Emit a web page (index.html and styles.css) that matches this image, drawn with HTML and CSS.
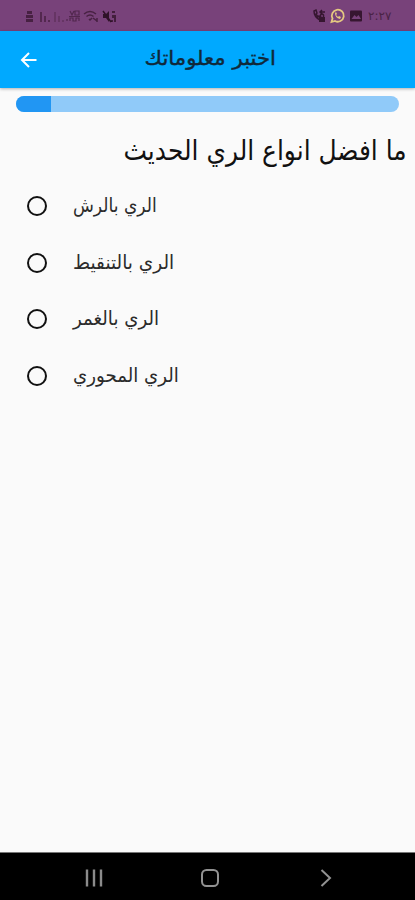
FILE: index.html
```html
<!DOCTYPE html>
<html lang="ar">
<head>
<meta charset="utf-8">
<title>اختبر معلوماتك</title>
<link rel="stylesheet" href="styles.css">
</head>
<body>
<div class="status">
  <svg class="status-left" width="96" height="18" viewBox="0 0 96 18" fill="none" stroke="#472142" stroke-width="1.5">
    <path d="M4 4h5v3h-5zM3 8h7v3h-7zM3 12h7v3h-7z" fill="#472142" stroke="none"/>
    <path d="M18 5v10M22 9v6M26 13v2"/>
    <path d="M32 5v10M36 9v6M40 13v2" opacity=".5"/>
    <path d="M44 14v-2M47 14v-3h3v3h3v-3h3v3M47 4l2 4 2-4M52 8V4h4v4zM46 9.500h11" stroke-width="1.200" opacity=".8"/>
    <path d="M61 7q6-5 12 0M63.500 9.500q3.500-3 7 0M66 12l1 1 2-2M70 11l4 3M74 11v4"/>
    <path d="M80 7h3l3-3v11l-3-4h-3z" fill="#301329" stroke="none"/>
    <path d="M80 4l8 11M89 5h3M90 8v3M92 8v7M89 13v2" stroke="#301329"/>
  </svg>
  <div class="status-right">
    <svg width="54" height="18" viewBox="0 0 54 18" fill="none" stroke="#361630" stroke-width="1.500">
      <path d="M1 4q0 6 6 9l2-2-3-2-1 1-2-3 1-1-1-3zM7 5h5M9 3l-2 2 2 2"/>
      <path d="M6 10h6v5h-6z" fill="#361630" stroke="none"/><path d="M7.500 10v-2q1.500-2 3 0v2"/>
      <path d="M18.500 15l1-3.500A6 6 0 1 1 22 14z" stroke="#e5c981" stroke-width="1.800"/>
      <path d="M22 6q0 5 5 6l1-2-2-1-1 1-2-2 1-1-1-2z" fill="#e5c981" stroke="none"/>
      <path d="M38 3.500h10q1 0 1 1v9q0 1-1 1H38q-1 0-1-1v-9q0-1 1-1z" fill="#361630" stroke="none"/>
      <path d="M38.500 12l3-4 2 2 2-2 2.500 4z" fill="#78427a" stroke="none"/>
    </svg>
    <span class="clock">٢:٢٧</span>
  </div>
</div>
<header class="bar">
  <svg class="back" width="18" height="18" viewBox="0 0 18 18" fill="none" stroke="#fff" stroke-width="2"><path d="M9 2L2 9l7 7M2 9h14.500"/></svg>
  <h1 class="title" dir="rtl"><span>اختبر معلوماتك</span></h1>
</header>
<main class="content">
  <div class="progress"><div class="progress-value"></div></div>
  <h2 class="question" dir="rtl"><span>ما افضل انواع الري الحديث</span></h2>
  <div class="options">
    <label class="option"><i class="radio"></i><span class="label narrow" dir="rtl">الري بالرش</span></label>
    <label class="option"><i class="radio"></i><span class="label wide" dir="rtl">الري بالتنقيط</span></label>
    <label class="option"><i class="radio"></i><span class="label" dir="rtl">الري بالغمر</span></label>
    <label class="option"><i class="radio"></i><span class="label" dir="rtl">الري المحوري</span></label>
  </div>
</main>
<nav class="nav">
  <svg width="18" height="18" viewBox="0 0 18 18" fill="none" stroke="#8b8b8b" stroke-width="2.400"><path d="M2 .5v17M9 .5v17M16 .5v17"/></svg>
  <svg class="home" width="20" height="20" viewBox="0 0 20 20" fill="none" stroke="#929292" stroke-width="2"><rect x="2" y="2" width="16" height="16" rx="4.500"/></svg>
  <svg width="12" height="18" viewBox="0 0 12 18" fill="none" stroke="#929292" stroke-width="2"><path d="M1.500 1l8.500 8-8.500 8"/></svg>
</nav>
</body>
</html>
```
FILE: styles.css
```css
* { box-sizing: border-box; }
body {
  margin: 0;
  height: 900px;
  display: flex;
  flex-direction: column;
  background: #fafafa;
  color: #111;
  font-family: "DejaVu Sans", sans-serif;
  overflow: hidden;
}
.status {
  flex: none;
  height: 31px;
  padding: 0 22px 0 23px;
  display: flex;
  justify-content: space-between;
  align-items: center;
  background: #78427a;
}
.status-right { display: flex; align-items: center; gap: 1px; }
.clock { width: 25px; font-size: 12px; line-height: 16px; color: #4a2346; white-space: nowrap; }
.bar {
  flex: none;
  height: 57px;
  padding-left: 20px;
  display: flex;
  align-items: center;
  background: #00a9ff;
  box-shadow: 0 1px 3px rgba(0, 0, 0, .3);
}
.title {
  margin: 0 0 3px 106px;
  width: 132px;
  font-size: 20px;
  font-weight: 400;
  line-height: 28px;
  color: #10283a;
  white-space: nowrap;
  -webkit-text-stroke: .4px #10283a;
}
.title span, .question span { display: inline-block; transform-origin: right center; }
.title span { transform: scale(1.06, 1); }
.content { flex: 1; padding: 8px 8px 0 16px; }
.progress {
  width: 383px;
  height: 16px;
  border-radius: 8px;
  background: #90caf9;
  overflow: hidden;
}
.progress-value { width: 35px; height: 100%; background: #2196f3; }
.question {
  margin: 16px 0 0;
  height: 44px;
  font-size: 26px;
  line-height: 44px;
  font-weight: 400;
  white-space: nowrap;
}
.question span { transform: scale(.958, 1.07); }
.options { margin-top: 6px; }
.option { display: flex; align-items: center; height: 56.5px; padding-left: 11px; }
.radio { width: 20px; height: 20px; border: 2.5px solid #111; border-radius: 50%; }
.label {
  margin-left: 26px;
  font-size: 18px;
  line-height: 28px;
  color: #2b2b2b;
  white-space: nowrap;
  transform-origin: left center;
  transform: scale(1.01, 1.08);
}
.narrow { transform: scale(.95, 1.08); }
.wide { transform: scale(1.025, 1.08); }
.nav {
  flex: none;
  height: 48px;
  padding: 2px 83px 0 85px;
  display: flex;
  align-items: center;
  justify-content: space-between;
  background: #000;
  border-top: 1px solid #777;
}
.home { margin-right: 4px; }
```
